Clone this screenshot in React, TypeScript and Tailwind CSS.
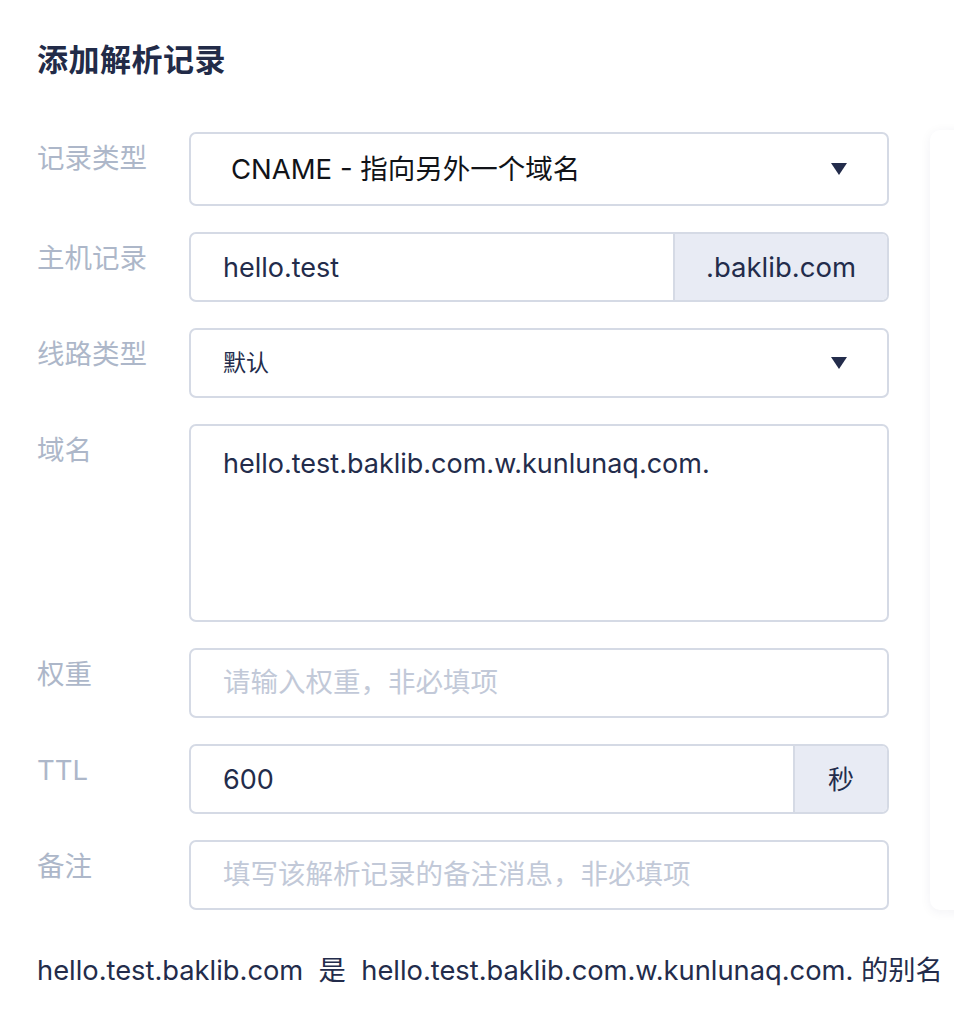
import React from 'react';

const font = { fontFamily: '"Inter", "Noto Sans CJK SC", sans-serif' };

function Label({ children }: { children: React.ReactNode }) {
  return (
    <div className="w-[152px] shrink-0 pt-[8px] text-[27.5px] leading-[36px] text-[#adb7c9]">
      {children}
    </div>
  );
}

function Caret() {
  return (
    <svg width="16" height="12" viewBox="0 0 16 12" className="shrink-0">
      <path d="M0 0 H16 L8 12 Z" fill="#232c4b" />
    </svg>
  );
}

export default function App() {
  return (
    <div className="min-h-screen w-full overflow-hidden bg-white text-[#232c4b]" style={font}>
      <div className="pl-[37px] pt-[40px]">
        <h1 className="text-[31px] font-bold leading-[40px] tracking-[0.5px] text-[#222b48]">添加解析记录</h1>

        <div className="mt-[52px] flex gap-[41px]">
          {/* form */}
          <div className="flex w-[852px] shrink-0 flex-col gap-[26px]">
            <div className="flex">
              <Label>记录类型</Label>
              <div className="flex h-[74px] w-[700px] items-center justify-between rounded-[7px] border-2 border-[#d5dae5] pl-[40px] pr-[40px]">
                <span className="pt-[2px] text-[27.5px] text-[#111318]">CNAME - 指向另外一个域名</span>
                <Caret />
              </div>
            </div>

            <div className="flex">
              <Label>主机记录</Label>
              <div className="flex h-[70px] w-[700px] overflow-hidden rounded-[7px] border-2 border-[#d5dae5]">
                <div className="flex flex-1 items-center pl-[32px] pt-[2px] text-[27px]">hello.test</div>
                <div className="flex w-[214px] items-center justify-center border-l-2 border-[#d5dae5] bg-[#e8ebf4] pt-[2px] text-[27.5px]">
                  .baklib.com
                </div>
              </div>
            </div>

            <div className="flex">
              <Label>线路类型</Label>
              <div className="flex h-[70px] w-[700px] items-center justify-between rounded-[7px] border-2 border-[#d5dae5] pl-[32px] pr-[40px]">
                <span className="text-[23px]">默认</span>
                <Caret />
              </div>
            </div>

            <div className="flex">
              <Label>域名</Label>
              <div className="h-[198px] w-[700px] rounded-[7px] border-2 border-[#d5dae5] pl-[32px] pt-[20px] text-[27px] leading-[36px]">
                hello.test.baklib.com.w.kunlunaq.com.
              </div>
            </div>

            <div className="flex">
              <Label>权重</Label>
              <div className="flex h-[70px] w-[700px] items-center rounded-[7px] border-2 border-[#d5dae5] pl-[32px] text-[27.5px] text-[#c2c9d8]">
                请输入权重，非必填项
              </div>
            </div>

            <div className="flex">
              <Label>TTL</Label>
              <div className="flex h-[70px] w-[700px] overflow-hidden rounded-[7px] border-2 border-[#d5dae5]">
                <div className="flex flex-1 items-center pl-[32px] pt-[2px] text-[27px]">600</div>
                <div className="flex w-[94px] items-center justify-center border-l-2 border-[#d5dae5] bg-[#e8ebf4] text-[26px]">
                  秒
                </div>
              </div>
            </div>

            <div className="flex">
              <Label>备注</Label>
              <div className="flex h-[70px] w-[700px] items-center rounded-[7px] border-2 border-[#d5dae5] pl-[32px] text-[27.5px] text-[#c2c9d8]">
                填写该解析记录的备注消息，非必填项
              </div>
            </div>
          </div>

          {/* side card */}
          <div className="-mt-[2px] h-[780px] w-[200px] shrink-0 rounded-[10px] bg-white shadow-[0_2px_12px_rgba(30,40,80,0.06)]" />
        </div>

        <p className="mt-[43px] whitespace-nowrap text-[27.3px] leading-[36px] text-[#232c4b]">
          hello.test.baklib.com&nbsp;&nbsp;是&nbsp;&nbsp;hello.test.baklib.com.w.kunlunaq.com. 的别名
        </p>
      </div>
    </div>
  );
}
